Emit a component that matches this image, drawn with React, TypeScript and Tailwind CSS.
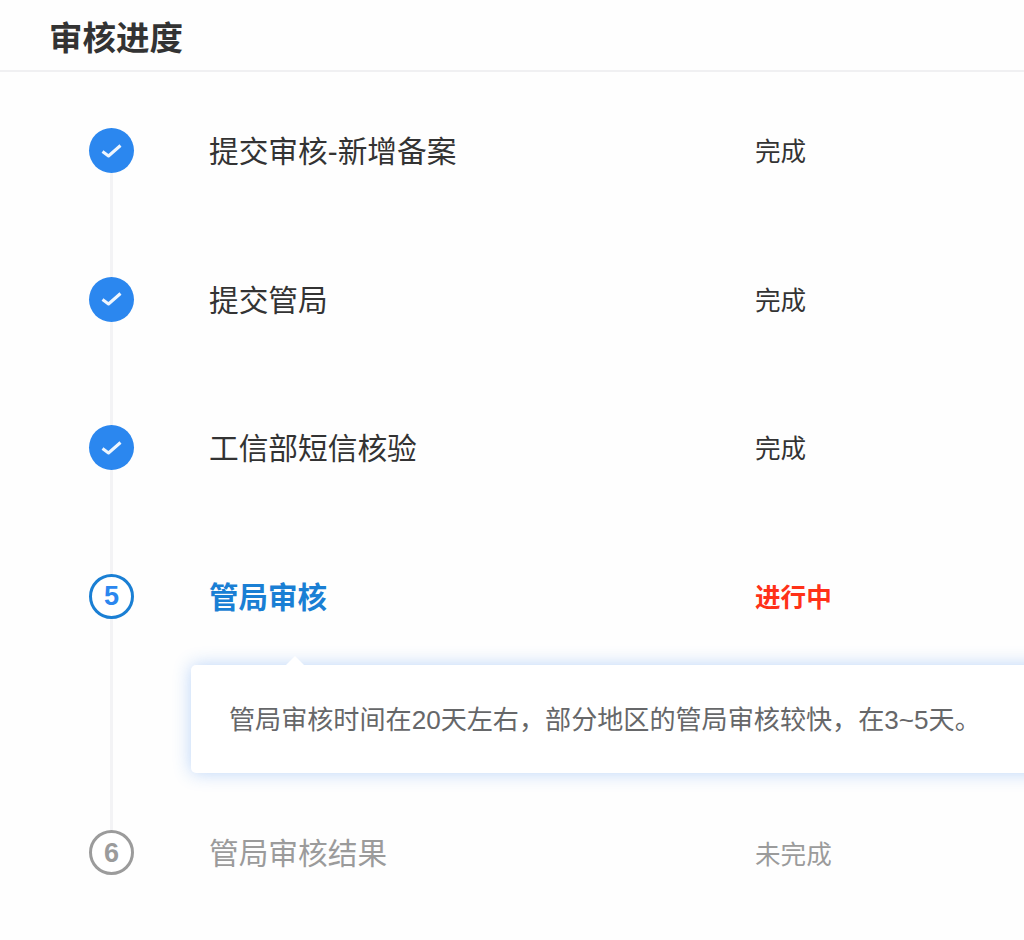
const FONT = "font-['Liberation_Sans','Noto_Sans_CJK_SC',sans-serif]";

// 审核步骤
const DONE_STEPS = ["提交审核-新增备案", "提交管局", "工信部短信核验"];

function CheckCircle() {
  return (
    <div className="flex h-[45px] w-[45px] shrink-0 items-center justify-center rounded-full bg-[#2b87ef]">
      <svg width="22" height="18" viewBox="0 0 22 18" fill="none">
        <path
          d="M1.5 9.5 L7.5 14 L19.5 3.5"
          stroke="white"
          strokeOpacity="0.92"
          strokeWidth="3"
          strokeLinejoin="round"
        />
      </svg>
    </div>
  );
}

function NumberCircle({ n, className }: { n: number; className: string }) {
  return (
    <div
      className={`flex h-[45px] w-[45px] shrink-0 items-center justify-center rounded-full border-[3.5px] bg-white text-[27px] font-bold ${className}`}
    >
      {n}
    </div>
  );
}

export default function App() {
  return (
    <div className={`h-[940px] w-[1024px] overflow-hidden bg-[#fefefe] ${FONT}`}>
      {/* header */}
      <div className="h-[72px] border-b-2 border-[#f0f0f2] pl-[49px] pt-[16px] text-[33.5px] leading-[46px] font-bold text-[#333333]">
        审核进度
      </div>

      <div className="relative pt-[48.5px]">
        {/* connector */}
        <div className="absolute left-[110px] top-[78px] h-[703px] w-[3px] bg-[#f3f3f5]" />

        {DONE_STEPS.map((title) => (
          <div key={title} className="relative mb-[88.67px] flex h-[60px] items-center pl-[89px]">
            <CheckCircle />
            <div className="ml-[75px] w-[546px] pt-[3.5px] text-[29.7px] text-[#333333]">{title}</div>
            <div className="pt-[3.5px] text-[25.6px] text-[#333333]">完成</div>
          </div>
        ))}

        <div className="relative flex h-[60px] items-center pl-[89px]">
          <NumberCircle n={5} className="border-[#1a7fd4] text-[#2b87ef]" />
          <div className="ml-[75px] w-[546px] pt-[3.5px] text-[29.5px] font-bold text-[#1a7fd4]">管局审核</div>
          <div className="pt-[3.5px] text-[25.6px] font-bold text-[#ff3118]">进行中</div>
        </div>

        {/* tip card */}
        <div className="relative ml-[191px] mr-[-30px] mt-[38.5px] flex h-[108px] items-center rounded-[5px] bg-white pl-[38px] pt-[3px] text-[26.1px] text-[#666769] shadow-[0_0_18px_rgba(43,125,235,0.32)]">
          <div className="absolute left-[95px] top-[-9px] h-0 w-0 border-x-[9px] border-b-[9px] border-x-transparent border-b-white" />
          管局审核时间在20天左右，部分地区的管局审核较快，在3~5天。
        </div>

        <div className="relative mt-[50px] flex h-[60px] items-center pl-[89px]">
          <NumberCircle n={6} className="border-[#9b9b9b] text-[#9b9b9b]" />
          <div className="ml-[75px] w-[546px] pt-[3.5px] text-[29.7px] text-[#9b9b9b]">管局审核结果</div>
          <div className="pt-[3.5px] text-[25.6px] text-[#9b9b9b]">未完成</div>
        </div>
      </div>
    </div>
  );
}
